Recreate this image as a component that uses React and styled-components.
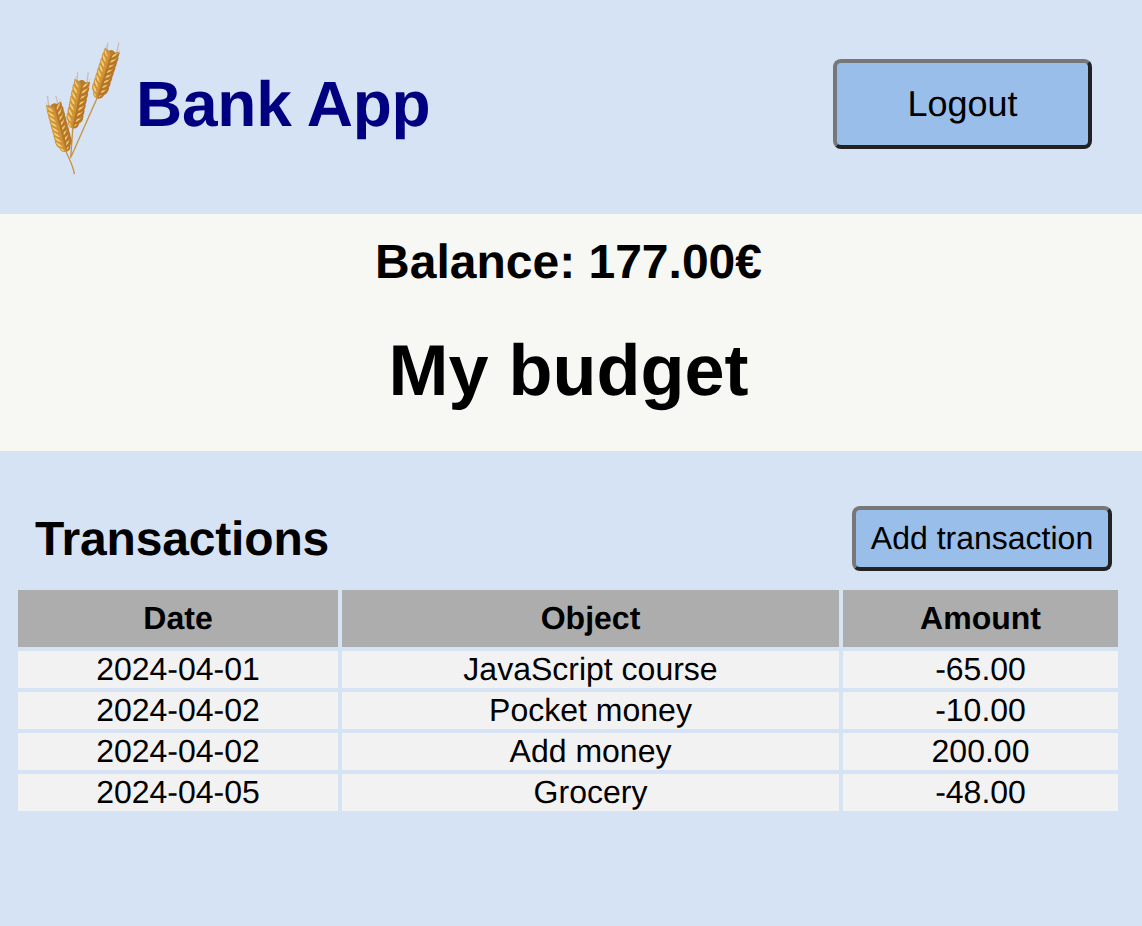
import React from 'react';
import styled, { createGlobalStyle } from 'styled-components';

const PAGE_BG = '#d6e3f5';
const BUTTON_BG = '#98bee9';

const transactions = [
  { date: '2024-04-01', object: 'JavaScript course', amount: '-65.00' },
  { date: '2024-04-02', object: 'Pocket money', amount: '-10.00' },
  { date: '2024-04-02', object: 'Add money', amount: '200.00' },
  { date: '2024-04-05', object: 'Grocery', amount: '-48.00' },
];

// one ear of wheat: rows of pointed grains on both sides of a line from base to tip
function Ear({ base, tip, rows = 8, width = 40 }) {
  const dx = tip[0] - base[0];
  const dy = tip[1] - base[1];
  const len = Math.hypot(dx, dy);
  const ux = dx / len;
  const uy = dy / len;
  const angle = (Math.atan2(dy, dx) * 180) / Math.PI;
  const grains = [];
  const awns = [];

  for (let i = 0; i < rows; i++) {
    const t = (i + 0.45) / rows;
    const taper = t < 0.12 ? 0.66 : t > 0.85 ? 0.94 : 1;
    const x = base[0] + dx * t;
    const y = base[1] + dy * t;
    [-1, 1].forEach((side) => {
      const off = width * 0.32 * taper;
      const nx = -uy * off * side;
      const ny = ux * off * side;
      const a = angle + side * 38;
      const r = width * 0.5 * taper;
      grains.push(
        <g key={`${i}${side}`} transform={`translate(${x + nx} ${y + ny}) rotate(${a})`}>
          <path
            d={`M${-r} 0 Q0 ${-r} ${r} 0 Q0 ${r} ${-r} 0Z`}
            fill={side > 0 ? '#b5742a' : '#cf9238'}
          />
          <path
            d={`M${-r * 0.55} ${-1} Q0 ${-r * 0.5} ${r * 0.78} ${-1} Q0 ${r * 0.16} ${-r * 0.55} ${-1}Z`}
            fill="#f4cf6c"
          />
        </g>
      );
      awns.push(
        <line
          key={`${i}${side}`}
          x1={x + nx * 1.5}
          y1={y + ny * 1.5}
          x2={x + nx * 1.8 + ux * 24}
          y2={y + ny * 1.8 + uy * 24}
          stroke="#c39f78"
          strokeWidth="3.5"
          opacity="0.3"
        />
      );
    });
  }

  return (
    <g>
      {awns}
      <line
        x1={base[0] + ux * 14}
        y1={base[1] + uy * 14}
        x2={tip[0] - ux * 6}
        y2={tip[1] - uy * 6}
        stroke="#b97c2e"
        strokeWidth={width * 0.62}
        strokeLinecap="round"
      />
      {grains}
      <path
        d={`M${tip[0] - 15} ${tip[1] + 8} L${tip[0] - 16 + ux * 14} ${tip[1] + uy * 30}
            M${tip[0] + 14} ${tip[1] + 8} L${tip[0] + ux * 28 + 13} ${tip[1] + uy * 30}`}
        stroke="#c08f58"
        strokeWidth="4"
        opacity="0.45"
        fill="none"
      />
    </g>
  );
}

function WheatLogo() {
  return (
    <LogoSvg viewBox="30 20 255 440" aria-hidden="true">
      <defs>
        <filter id="soft" x="-10%" y="-10%" width="120%" height="120%">
          <feGaussianBlur stdDeviation="1.6" />
        </filter>
      </defs>
      <g filter="url(#soft)">
        <path
          d="M133 446 C131 425 122 410 108 378 M122 398 L129 300 M124 392 L202 216"
          fill="none"
          stroke="#c8923f"
          strokeWidth="4"
        />
        <Ear base={[108, 376]} tip={[72, 240]} rows={9} />
        <Ear base={[128, 306]} tip={[156, 170]} rows={8} />
        <Ear base={[202, 216]} tip={[245, 80]} rows={9} />
      </g>
    </LogoSvg>
  );
}

export default function App() {
  return (
    <>
      <GlobalStyle />
      <Header>
        <Brand>
          <WheatLogo />
          <Title>Bank App</Title>
        </Brand>
        <LogoutButton>Logout</LogoutButton>
      </Header>

      <Summary>
        <Balance>Balance: 177.00€</Balance>
        <Budget>My budget</Budget>
      </Summary>

      <Section>
        <SectionHead>
          <SectionTitle>Transactions</SectionTitle>
          <AddButton>Add transaction</AddButton>
        </SectionHead>
        <Table>
          <colgroup>
            <col style={{ width: 320 }} />
            <col style={{ width: 497 }} />
            <col style={{ width: 275 }} />
          </colgroup>
          <thead>
            <tr>
              <Th>Date</Th>
              <Th>Object</Th>
              <Th>Amount</Th>
            </tr>
          </thead>
          <tbody>
            {transactions.map((row, i) => (
              <tr key={i}>
                <Td>{row.date}</Td>
                <Td>{row.object}</Td>
                <Td>{row.amount}</Td>
              </tr>
            ))}
          </tbody>
        </Table>
      </Section>
    </>
  );
}

const GlobalStyle = createGlobalStyle`
  html, body {
    margin: 0;
    padding: 0;
    min-height: 100%;
    background: ${PAGE_BG};
    color: #000;
    font-family: "Liberation Sans", Arial, sans-serif;
    text-rendering: geometricPrecision;
  }
`;

const Header = styled.header`
  height: 214px;
  box-sizing: border-box;
  padding: 0 50px 6px 40px;
  display: flex;
  align-items: center;
  justify-content: space-between;
`;

const Brand = styled.div`
  display: flex;
  align-items: center;
`;

const LogoSvg = styled.svg`
  width: 85px;
  height: 147px;
  margin-top: 2px;
  flex-shrink: 0;
`;

const Title = styled.h1`
  margin: 0 0 0 11px;
  font-size: 64px;
  font-weight: 700;
  letter-spacing: -0.25px;
  color: #000080;
`;

const Button = styled.button`
  box-sizing: border-box;
  padding: 0;
  background: ${BUTTON_BG};
  color: #000;
  font-family: inherit;
  text-rendering: inherit;
  border-style: solid;
  border-width: 4px;
  border-color: #777 #222 #222 #777;
  border-radius: 8px;
`;

const LogoutButton = styled(Button)`
  width: 259px;
  height: 90px;
  font-size: 36px;
`;

const AddButton = styled(Button)`
  width: 260px;
  height: 65px;
  font-size: 32px;
`;

const Summary = styled.section`
  height: 237px;
  box-sizing: border-box;
  padding: 21px 5px 0 0;
  background: #f7f8f3;
  text-align: center;
`;

const Balance = styled.div`
  font-size: 48px;
  font-weight: 700;
`;

const Budget = styled.h2`
  margin: 40px 0 0;
  font-size: 72px;
  font-weight: 700;
`;

const Section = styled.section`
  padding: 55px 20px 0 14px;
`;

const SectionHead = styled.div`
  display: flex;
  align-items: center;
  justify-content: space-between;
  padding: 0 10px 0 21px;
  margin-bottom: 15px;
`;

const SectionTitle = styled.h3`
  margin: 2px 0 0;
  font-size: 48px;
  font-weight: 700;
  letter-spacing: -0.17px;
`;

const Table = styled.table`
  width: 1108px;
  table-layout: fixed;
  border-collapse: separate;
  border-spacing: 4px;
  font-size: 32px;
`;

const Th = styled.th`
  padding: 10px 0;
  background: #adadad;
  font-weight: 700;
`;

const Td = styled.td`
  padding: 0;
  background: #f2f2f2;
  text-align: center;
`;
